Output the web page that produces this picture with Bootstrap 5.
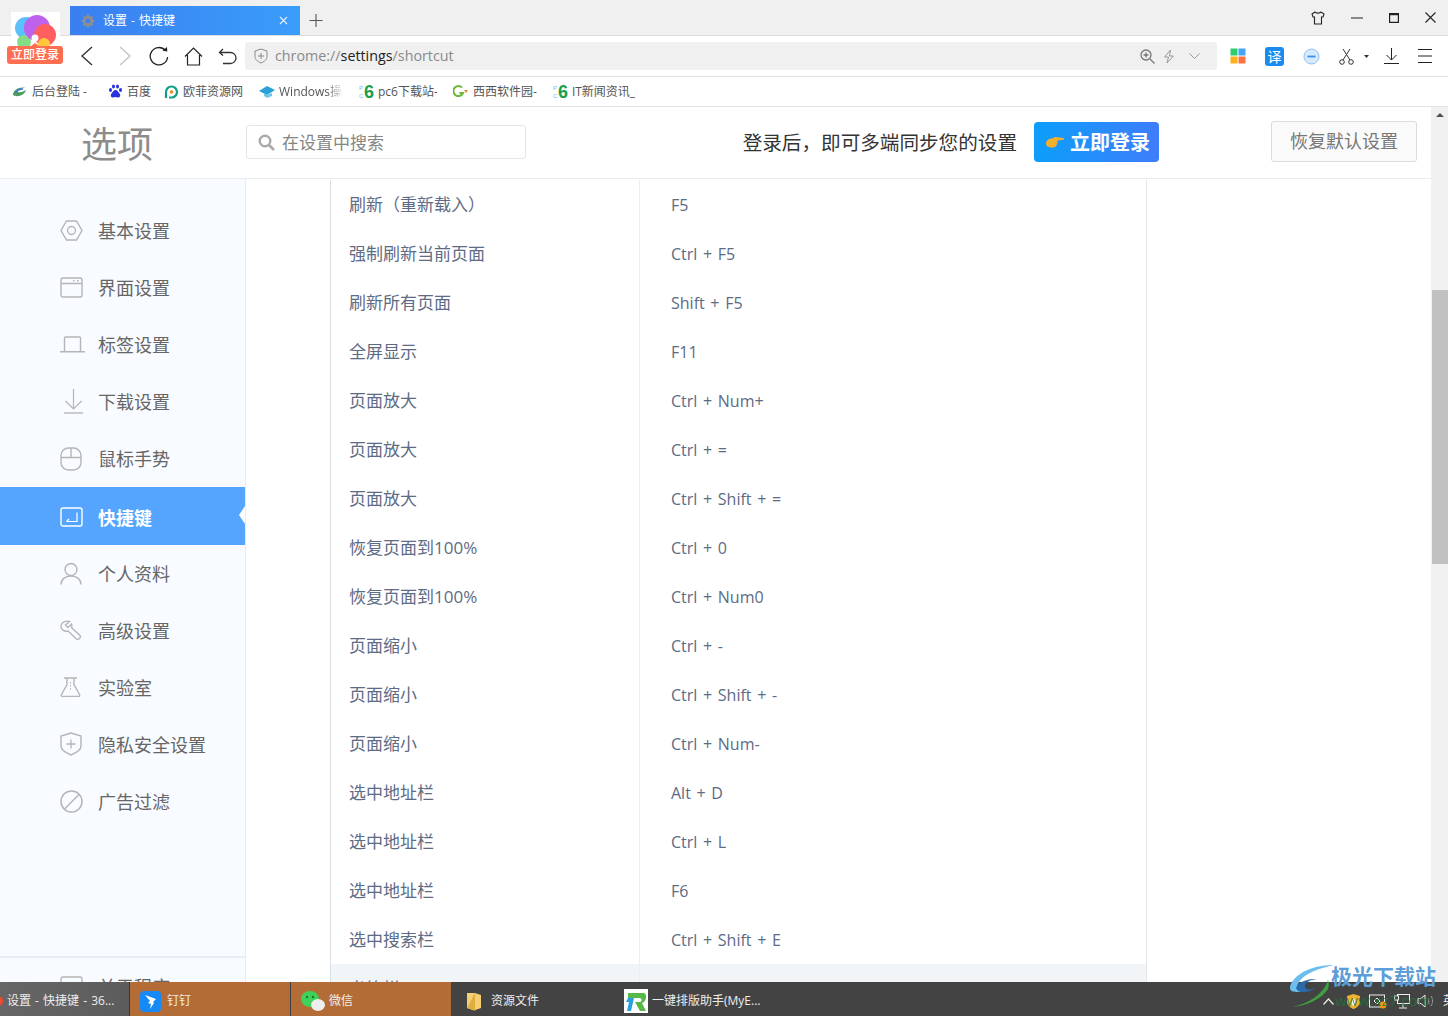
<!DOCTYPE html>
<html lang="zh-CN">
<head>
    <meta charset="UTF-8">
    <meta name="viewport" content="width=device-width, initial-scale=1.0">
    <title>设置 - 快捷键</title>
    <link href="https://cdn.jsdelivr.net/npm/bootstrap@5.3.0/dist/css/bootstrap.min.css" rel="stylesheet">
    <style>
        html, body { height: 1016px; overflow: hidden; }
        body { font-family: "Open Sans", "Noto Sans CJK SC", sans-serif; position: relative; background: #fff; }
        svg { display: block; flex: none; }

        /* browser chrome */
        .tab-strip { height: 36px; background: #f0f0f0; border-bottom: 1px solid #dcdcdc; padding-left: 70px; }
        .tab-active { width: 230px; height: 29px; margin-top: 6px; padding: 0 12px 0 11px; background: linear-gradient(90deg, #3a7ff0, #3a9dfb); color: #fff; font-size: 12px; word-spacing: 1px; }
        .tab-active .tab-x { margin-left: auto; }
        .tab-plus { margin-left: 9px; margin-top: 6px; }
        .win-btns { width: 137px; padding-right: 12px; }
        .addr-row { height: 41px; border-bottom: 1px solid #e3e3e3; background: #fff; padding-left: 79px; }
        .nav-ico { width: 34.5px; }
        .nav-fwd { padding-left: 3px; width: 35.5px; }
        .nav-undo { width: 23px; }
        .addr-box { margin-left: 4px; width: 972px; height: 28px; background: #f0f0f0; border-radius: 3px; padding: 0 17px 0 9px; font-size: 14.3px; color: #8a8a8a; gap: 7px; }
        .addr-box b { font-weight: 400; color: #222; }
        .addr-tail { margin-left: auto; gap: 8px; }
        .addr-chev { margin-left: 6px; }
        .tool-ico { margin-left: 13px; gap: 18px; }
        .tool-a { margin-left: 1px; }
        .tool-b { margin-left: -3px; }
        .scis-group { gap: 10px; margin-left: 1px; }
        .mark-row { height: 30px; border-bottom: 1px solid #e3e3e3; padding-left: 12px; font-size: 12px; color: #555; gap: 16px; }
        .mark-item { gap: 4px; }
        .mark-first { min-width: 60px; margin-left: 1px; }
        .mark-w59 { width: 59px; overflow: hidden; }
        .mark-fade { max-width: 64px; white-space: nowrap; overflow: hidden; -webkit-mask-image: linear-gradient(90deg, #000 75%, transparent); mask-image: linear-gradient(90deg, #000 75%, transparent); }
        .pc-logo { width: 15px; height: 16px; }
        .pc-logo-side { width: 5px; font: 6px/8px "Liberation Sans", sans-serif; color: #6cc0f0; }
        .pc-logo-six { font: 700 18px/16px "Liberation Sans", sans-serif; color: #1aa04a; }

        .app-badge { position: absolute; left: 7px; top: 12px; width: 56px; }
        .app-badge-bg { margin: 0 auto; width: 49px; height: 38px; background: #fff; padding: 3px 0 0 4px; }
        .app-badge-tag { margin-top: -4px; position: relative; height: 18px; background: #ff6e50; border-radius: 3px; color: #fff; font-size: 12px; line-height: 18px; text-align: center; font-weight: 500; }
        .app-badge-tag::before { content: ""; position: absolute; left: 24px; top: -3px; border: 4px solid transparent; border-top: 0; border-bottom: 3px solid #ff6e50; }

        /* page */
        .page-wrap { height: 875px; overflow: hidden; }
        .page-main { width: 1431px; }
        .opt-head { height: 72px; border-bottom: 1px solid #e9ecef; padding: 0 14px 2px 0; }
        .opt-title { width: 246px; padding: 6px 0 0 81px; font-size: 36px; color: #8c8c8c; line-height: 1; }
        .opt-search { width: 280px; height: 34px; border: 1px solid #e3e5e8; border-radius: 3px; padding: 2px 0 0 11px; gap: 7px; font-size: 17px; color: #858585; }
        .opt-sync { margin-left: auto; padding-top: 3px; font-size: 19.6px; color: #333; }
        .opt-login { margin-left: 17px; width: 125px; height: 40px; padding: 2px 0 0 11px; gap: 5px; border: 0; border-radius: 4px; background: linear-gradient(90deg, #0c9efb, #3f7dfa); color: #fff; font-size: 20px; font-weight: 700; }
        .opt-reset { margin-left: 112px; width: 146px; height: 41px; border: 1px solid #dcdcdc; border-radius: 3px; background: #fafafa; color: #777; font-size: 18px; padding: 0; }

        .opt-body { height: 803px; overflow: hidden; }
        .side-col { width: 246px; flex: none; background: #f8fbff; border-right: 1px solid #e8ecf2; padding-top: 23px; }
        .side-item { height: 57.1px; padding: 2px 0 0 60px; gap: 15px; font-size: 18px; color: #666; }
        .side-item.is-on { background: #55a5ff; color: #fff; font-weight: 700; position: relative; padding-top: 4px; }
        .side-item.is-on::after { content: ""; position: absolute; right: 0; top: 19px; border: 9px solid transparent; border-left: 0; border-right: 6px solid #fff; }
        .side-ico { width: 23px; margin-top: -2px; }
        .side-foot { margin-top: 126px; border-top: 2px solid #e9edf3; }

        .keys-col { padding: 1px 0 0 84px; }
        .keys-box { width: 817px; border-left: 1px solid #d9dee4; border-right: 1px solid #e3e6ea; }
        .key-line { height: 49px; }
        .key-line.is-band { background: #f1f5f8; }
        .key-name { width: 309px; padding-left: 18px; font-size: 17px; color: #5d6b85; border-right: 1px solid #eeeeee; line-height: 50px; }
        .key-combo { padding-left: 31px; font-size: 16px; color: #5d6b85; line-height: 51px; word-spacing: 1.5px; }

        .scroll-rail { width: 17px; background: #f1f1f1; position: relative; }
        .scroll-up { margin: 6px auto 0; width: 0; border: 4px solid transparent; border-top: 0; border-bottom: 4px solid #505050; }
        .scroll-thumb { position: absolute; left: 1px; right: 0; top: 183px; height: 274px; background: #c1c1c1; }

        /* taskbar */
        .task-bar { height: 34px; background: #434343; color: #eee; font-size: 12px; white-space: nowrap; }
        .task-cell { height: 34px; padding-top: 4px; }
        .task-first { width: 130px; padding-left: 7px; background: linear-gradient(90deg, #666, #5c5c5c); border-right: 1px solid #333; word-spacing: 1px; position: relative; overflow: hidden; }
        .task-first::before { content: ""; position: absolute; left: -7px; top: 14px; width: 10px; height: 10px; border-radius: 50%; background: #f0492e; }
        .task-org { width: 161px; background: #b46c36; border-right: 1px solid #3f3f3f; gap: 6px; padding-left: 10px; }
        .task-wx { gap: 4px; }
        .task-dark { width: 172px; padding-left: 14px; gap: 9px; }
        .task-tray { margin-left: auto; gap: 9px; padding-top: 4px; }
        .tray-a { margin-left: 4px; }
        .tray-b { margin-left: -4px; }
        .tray-c { margin-left: -2px; }
        .tray-end { width: 5px; overflow: hidden; }

        .site-mark { position: absolute; left: 1288px; top: 964px; width: 160px; height: 50px; pointer-events: none; }
        .site-mark-name { position: absolute; left: 43px; top: -2px; font-size: 21px; font-weight: 700; color: #5d9ed8; line-height: 28px; white-space: nowrap; }
        .site-mark-url { position: absolute; left: 47px; top: 26px; font-size: 15px; color: #1f7a3a; opacity: .75; line-height: 20px; white-space: nowrap; }
        .site-mark svg { position: absolute; left: 0; top: 0; }
    </style>
</head>
<body>
    <div class="tab-strip d-flex">
        <div class="tab-active d-flex align-items-center gap-2">
            <svg width="14" height="14" viewBox="0 0 14 14"><circle cx="7" cy="7" r="3.8" fill="none" stroke="#8e8e8e" stroke-width="2.8"/><path d="M7 .5v2.4M7 11.1v2.4M.5 7h2.4M11.1 7h2.4M2.4 2.4l1.7 1.7M9.9 9.9l1.7 1.7M2.4 11.6l1.7-1.7M9.9 4.1l1.7-1.7" stroke="#8e8e8e" stroke-width="2"/></svg>
            <span>设置 - 快捷键</span>
            <svg class="tab-x" width="9" height="9" viewBox="0 0 9 9"><path d="M1 1l7 7M8 1L1 8" stroke="#e4f0ff" stroke-width="1.1"/></svg>
        </div>
        <svg class="tab-plus" width="14" height="28" viewBox="0 0 14 28"><path d="M7 8v13M.5 14.500h13" stroke="#555" stroke-width="1.100"/></svg>
        <div class="win-btns d-flex align-items-center justify-content-between ms-auto">
            <svg width="14" height="14" viewBox="0 0 14 14"><path d="M4 1L1 3l1 3h1.500v7h7V6H12l1-3-3-2c-.7 1.500-5.300 1.500-6 0z" fill="none" stroke="#222" stroke-width="1.100"/></svg>
            <svg width="12" height="2" viewBox="0 0 12 2"><path d="M0 1h12" stroke="#222"/></svg>
            <svg width="10" height="10" viewBox="0 0 10 10"><path d="M.6.6h8.800v8.800H.6z" fill="none" stroke="#222" stroke-width="1.200"/><path d="M0 1.500h10" stroke="#222" stroke-width="1.500"/></svg>
            <svg width="11" height="11" viewBox="0 0 11 11"><path d="M.5.5l10 10M10.500.5l-10 10" stroke="#222" stroke-width="1.100"/></svg>
        </div>
    </div>

    <div class="addr-row d-flex align-items-center">
        <div class="nav-ico"><svg width="16" height="20" viewBox="0 0 16 20"><path d="M13 1L3 10l10 9" fill="none" stroke="#333" stroke-width="1.400"/></svg></div>
        <div class="nav-fwd"><svg width="16" height="20" viewBox="0 0 16 20"><path d="M3 1l10 9-10 9" fill="none" stroke="#c4c4c4" stroke-width="1.400"/></svg></div>
        <div class="nav-ico"><svg width="20" height="20" viewBox="0 0 20 20"><path d="M16.500 4.500A8.700 8.700 0 1 0 18.600 11" fill="none" stroke="#222" stroke-width="1.300"/><path d="M13.500 4.800l4.800.7-.3-4.600z" fill="#222"/></svg></div>
        <div class="nav-ico"><svg width="19" height="19" viewBox="0 0 19 19"><path d="M1 9.500L9.500 1 18 9.500M3.500 8v10h12V8" fill="none" stroke="#222" stroke-width="1.200"/></svg></div>
        <div class="nav-undo"><svg width="19" height="17" viewBox="0 0 19 17"><path d="M5 1L1.500 4.500 5 7.500" fill="none" stroke="#222" stroke-width="1.200"/><path d="M2 4.500h10.500a5.500 5.500 0 0 1 0 11H5" fill="none" stroke="#333" stroke-width="1.300"/></svg></div>
        <div class="addr-box d-flex align-items-center">
            <svg width="14" height="16" viewBox="0 0 14 16"><path d="M7 1l6 2v5.500c0 3-2.500 5-6 6.500-3.500-1.500-6-3.500-6-6.500V3z" fill="none" stroke="#8a8a8a"/><path d="M7 5v6M4 8h6" stroke="#8a8a8a"/></svg>
            <span>chrome://<b>settings</b>/shortcut</span>
            <div class="addr-tail d-flex align-items-center">
                <svg width="15" height="15" viewBox="0 0 15 15"><circle cx="6" cy="6" r="5" fill="none" stroke="#777" stroke-width="1.300"/><path d="M6 3.500v5M3.500 6h5M10 10l4.500 4.500" stroke="#777" stroke-width="1.300"/></svg>
                <svg width="12" height="15" viewBox="0 0 12 15"><path d="M7.500 1L1.500 8h4L4 14l6.500-7H6.500z" fill="none" stroke="#999"/></svg>
                <svg class="addr-chev" width="11" height="7" viewBox="0 0 11 7"><path d="M.5.500l5 5 5-5" fill="none" stroke="#999"/></svg>
            </div>
        </div>
        <div class="tool-ico d-flex align-items-center">
            <svg width="16" height="16" viewBox="0 0 16 16"><path d="M.5.500h7v7h-7z" fill="#2ecc71"/><path d="M8.500.500h7v7h-7z" fill="#42a5f5"/><path d="M.5 8.500h7v7h-7z" fill="#ffb020"/><path d="M8.500 8.500h7v7h-7z" fill="#ff7043"/></svg>
            <svg class="tool-a" width="19" height="19" viewBox="0 0 19 19"><rect width="19" height="19" rx="3" fill="#1a8cf0"/><text x="9.500" y="15" text-anchor="middle" font-size="14" fill="#fff" font-family="Noto Sans CJK SC">译</text></svg>
            <svg class="tool-a" width="17" height="17" viewBox="0 0 17 17"><circle cx="8.500" cy="8.500" r="7.500" fill="#d6e9fd" stroke="#8cc2f7"/><path d="M4.500 8.500h8" stroke="#3b8fe8" stroke-width="1.800"/></svg>
            <div class="scis-group d-flex align-items-center">
                <svg width="15" height="17" viewBox="0 0 15 17"><circle cx="3" cy="14" r="2.300" fill="none" stroke="#333"/><circle cx="12" cy="14" r="2.300" fill="none" stroke="#333"/><path d="M4 12L11 1M11 12L4 1" stroke="#333"/></svg>
                <svg width="5" height="3" viewBox="0 0 5 3"><path d="M0 0h5L2.500 3z" fill="#333"/></svg>
            </div>
            <svg class="tool-b" width="15" height="16" viewBox="0 0 15 16"><path d="M7.500 0v12M2.500 7l5 5 5-5M0 15.500h15" fill="none" stroke="#222"/></svg>
            <svg class="tool-a" width="14" height="14" viewBox="0 0 14 14"><path d="M0 .5h14M0 7h14M0 13.500h14" stroke="#222"/></svg>
        </div>
    </div>

    <div class="mark-row d-flex align-items-center">
        <div class="mark-item d-flex align-items-center"><svg width="15" height="12" viewBox="0 0 15 12"><path d="M1 9c0-5 7-9 13-7C9 2 6 4 6 6c3 1 6-1 8-2-1 5-9 8-13 5z" fill="#4a9a60"/><path d="M3 7c2-3 6-4 8-4" stroke="#3a7bd5" fill="none" stroke-width="1.500"/></svg><span class="mark-first text-nowrap">后台登陆 -</span></div>
        <div class="mark-item d-flex align-items-center"><svg width="15" height="15" viewBox="0 0 15 15"><g fill="#2932e1"><ellipse cx="2.500" cy="6" rx="1.500" ry="2"/><ellipse cx="5.500" cy="2.500" rx="1.500" ry="2"/><ellipse cx="9.500" cy="2.500" rx="1.500" ry="2"/><ellipse cx="12.500" cy="6" rx="1.500" ry="2"/><path d="M7.500 6c-2 0-2.500 2-4 3.500-1.500 2-.5 4 1.500 4 1 0 1.500-.4 2.500-.4s1.500.4 2.500.4c2 0 3-2 1.500-4C10 8 9.500 6 7.500 6z"/></g></svg><span>百度</span></div>
        <div class="mark-item d-flex align-items-center" style="margin-left:-4px"><svg width="16" height="16" viewBox="0 0 16 16"><path d="M3 14V8a5.500 5.500 0 1 1 5.500 5.500H6" fill="none" stroke="#11a083" stroke-width="2.200"/><circle cx="8.500" cy="8" r="1.800" fill="#f08a24"/></svg><span>欧菲资源网</span></div>
        <div class="mark-item d-flex align-items-center"><svg width="16" height="13" viewBox="0 0 16 13"><path d="M0 6l8-5 8 4-8 5z" fill="#2ba0d8"/><path d="M5 8l3 2 5-2v3l-5 2-3-2z" fill="#6cc6ec"/></svg><span class="mark-fade">Windows操作系统</span></div>
        <div class="mark-item d-flex align-items-center"><div class="pc-logo d-flex align-items-center"><div class="pc-logo-side"><div>P</div><div>C</div></div><div class="pc-logo-six">6</div></div><span class="mark-w59 text-nowrap">pc6下载站-</span></div>
        <div class="mark-item d-flex align-items-center"><svg width="16" height="15" viewBox="0 0 16 15"><path d="M9 3.500A5 5 0 1 0 10 9H6.500" fill="none" stroke="#6cb83a" stroke-width="2"/><path d="M11 6h4l-2 3z" fill="#e08a2a"/></svg><span class="text-nowrap">西西软件园-</span></div>
        <div class="mark-item d-flex align-items-center"><div class="pc-logo d-flex align-items-center"><div class="pc-logo-side"><div>P</div><div>C</div></div><div class="pc-logo-six">6</div></div><span class="text-nowrap">IT新闻资讯_</span></div>
    </div>

    <div class="app-badge">
        <div class="app-badge-bg">
            <svg width="42" height="35" viewBox="0 0 42 35"><circle cx="11" cy="13" r="11" fill="#5cc0fa"/><circle cx="9" cy="27" r="7" fill="#84dc84"/><circle cx="22" cy="13" r="13" fill="#be62ee"/><circle cx="30" cy="20" r="11" fill="#ff5f5f"/><circle cx="29" cy="29" r="6" fill="#ffc83c"/><circle cx="20" cy="23" r="3.500" fill="#fff"/></svg>
        </div>
        <div class="app-badge-tag">立即登录</div>
    </div>

    <div class="page-wrap d-flex">
        <div class="page-main">
            <div class="opt-head d-flex align-items-center">
                <div class="opt-title">选项</div>
                <div class="opt-search d-flex align-items-center">
                    <svg width="17" height="17" viewBox="0 0 17 17"><circle cx="7" cy="7" r="5.300" fill="none" stroke="#aaa" stroke-width="2.400"/><path d="M11 11l5 5" stroke="#aaa" stroke-width="2.600"/></svg>
                    <span>在设置中搜索</span>
                </div>
                <div class="opt-sync">登录后，即可多端同步您的设置</div>
                <button class="btn opt-login d-flex align-items-center" type="button">
                    <svg width="20" height="13" viewBox="0 0 20 13"><path d="M1 7.500c0-3 3-5 6-5L10 1l8.500 1c1 .5.500 1.800 0 1.800L12.500 4.500c0 2.500-.5 5-2.500 6.500-3 1.500-9 .5-9-3.500z" fill="#f3b02c"/></svg>
                    <span>立即登录</span>
                </button>
                <button class="btn opt-reset" type="button">恢复默认设置</button>
            </div>
            <div class="opt-body d-flex">
                <div class="side-col">
                    <div class="side-item d-flex align-items-center"><span class="side-ico"><svg width="23" height="21" viewBox="0 0 23 21"><path d="M6.500 1h10l5.500 9.500L16.500 20h-10L1 10.500z" fill="none" stroke="#b5b5b5" stroke-width="1.400"/><circle cx="11.500" cy="10.500" r="4" fill="none" stroke="#b5b5b5" stroke-width="1.400"/></svg></span>基本设置</div>
                    <div class="side-item d-flex align-items-center"><span class="side-ico"><svg width="23" height="21" viewBox="0 0 23 21"><rect x="1" y="1" width="21" height="19" rx="2" fill="none" stroke="#b5b5b5" stroke-width="1.400"/><path d="M1 6.500h21M13 3.800h1.500M17 3.800h1.500" stroke="#b5b5b5" stroke-width="1.400"/></svg></span>界面设置</div>
                    <div class="side-item d-flex align-items-center"><span class="side-ico"><svg width="25" height="17" viewBox="0 0 25 17"><path d="M4.500 15.500V2a1 1 0 0 1 1-1h14a1 1 0 0 1 1 1v13.500M0 15.800h25" fill="none" stroke="#b5b5b5" stroke-width="1.400"/></svg></span>标签设置</div>
                    <div class="side-item d-flex align-items-center"><span class="side-ico"><svg class="ms-1" width="19" height="25" viewBox="0 0 19 25"><path d="M9.500 0v20M1.500 12l8 8 8-8" fill="none" stroke="#b5b5b5" stroke-width="1.200"/><path d="M0 24h19" stroke="#b5b5b5" stroke-width="1.400"/></svg></span>下载设置</div>
                    <div class="side-item d-flex align-items-center"><span class="side-ico"><svg width="22" height="24" viewBox="0 0 22 24"><rect x="1" y="1" width="20" height="22" rx="7.500" fill="none" stroke="#b5b5b5" stroke-width="1.400"/><path d="M1 10.500h20M11 1v9.500" stroke="#b5b5b5" stroke-width="1.400"/></svg></span>鼠标手势</div>
                    <div class="side-item is-on d-flex align-items-center"><span class="side-ico"><svg width="23" height="20" viewBox="0 0 23 20"><rect x="1" y="1" width="21" height="18" rx="2" fill="none" stroke="#fff" stroke-width="1.400"/><path d="M17 5.500v9H6.500M9 12l-2.500 2.500" fill="none" stroke="#fff" stroke-width="1.200"/></svg></span>快捷键</div>
                    <div class="side-item d-flex align-items-center"><span class="side-ico"><svg width="22" height="23" viewBox="0 0 22 23"><circle cx="11" cy="7.500" r="6" fill="none" stroke="#b5b5b5" stroke-width="1.400"/><path d="M1 22.500c0-5 4-8.500 10-8.500s10 3.500 10 8.500" fill="none" stroke="#b5b5b5" stroke-width="1.400"/></svg></span>个人资料</div>
                    <div class="side-item d-flex align-items-center"><span class="side-ico"><svg class="mt-n1" width="22" height="21" viewBox="0 0 22 21"><path d="M9.500 1.500L5.500 5 8 7.500 11.500 4C12 5.500 12 6.500 11.500 7.500L20 15.500C21.500 17 18.500 20.500 16.500 19L8 11C4.500 12 .5 9.500 1 5.500 1.500 2 6 .5 9.500 1.500z" fill="none" stroke="#b5b5b5" stroke-width="1.400"/></svg></span>高级设置</div>
                    <div class="side-item d-flex align-items-center"><span class="side-ico"><svg width="21" height="20" viewBox="0 0 21 20"><path d="M4 1h13M7 1v6.500L1.500 17.500c-.5 1 0 2 1 2h16c1 0 1.500-1 1-2L14 7.500V1" fill="none" stroke="#b5b5b5" stroke-width="1.400"/><path d="M10.500 5v9" stroke="#b5b5b5" stroke-dasharray="1.500 1.500"/></svg></span>实验室</div>
                    <div class="side-item d-flex align-items-center"><span class="side-ico"><svg width="22" height="24" viewBox="0 0 22 24"><path d="M11 1l10 3v10c0 4-5 7-10 9-5-2-10-5-10-9V4z" fill="none" stroke="#b5b5b5" stroke-width="1.400"/><path d="M11 7.500v9M6.500 12h9" stroke="#b5b5b5" stroke-width="1.300"/></svg></span>隐私安全设置</div>
                    <div class="side-item d-flex align-items-center"><span class="side-ico"><svg width="23" height="23" viewBox="0 0 23 23"><circle cx="11.500" cy="11.500" r="10.500" fill="none" stroke="#b5b5b5" stroke-width="1.500"/><path d="M4.500 19L19 4.500" stroke="#b5b5b5" stroke-width="1.500"/></svg></span>广告过滤</div>
                    <div class="side-foot">
                        <div class="side-item d-flex align-items-center"><span class="side-ico"><svg width="23" height="21" viewBox="0 0 23 21"><rect x="1" y="1" width="21" height="19" rx="2" fill="none" stroke="#b5b5b5" stroke-width="1.400"/></svg></span>关于程序</div>
                    </div>
                </div>
                <div class="keys-col">
                    <div class="keys-box">
                        <div class="key-line d-flex"><div class="key-name">刷新（重新载入）</div><div class="key-combo">F5</div></div>
                        <div class="key-line d-flex"><div class="key-name">强制刷新当前页面</div><div class="key-combo">Ctrl + F5</div></div>
                        <div class="key-line d-flex"><div class="key-name">刷新所有页面</div><div class="key-combo">Shift + F5</div></div>
                        <div class="key-line d-flex"><div class="key-name">全屏显示</div><div class="key-combo">F11</div></div>
                        <div class="key-line d-flex"><div class="key-name">页面放大</div><div class="key-combo">Ctrl + Num+</div></div>
                        <div class="key-line d-flex"><div class="key-name">页面放大</div><div class="key-combo">Ctrl + =</div></div>
                        <div class="key-line d-flex"><div class="key-name">页面放大</div><div class="key-combo">Ctrl + Shift + =</div></div>
                        <div class="key-line d-flex"><div class="key-name">恢复页面到100%</div><div class="key-combo">Ctrl + 0</div></div>
                        <div class="key-line d-flex"><div class="key-name">恢复页面到100%</div><div class="key-combo">Ctrl + Num0</div></div>
                        <div class="key-line d-flex"><div class="key-name">页面缩小</div><div class="key-combo">Ctrl + -</div></div>
                        <div class="key-line d-flex"><div class="key-name">页面缩小</div><div class="key-combo">Ctrl + Shift + -</div></div>
                        <div class="key-line d-flex"><div class="key-name">页面缩小</div><div class="key-combo">Ctrl + Num-</div></div>
                        <div class="key-line d-flex"><div class="key-name">选中地址栏</div><div class="key-combo">Alt + D</div></div>
                        <div class="key-line d-flex"><div class="key-name">选中地址栏</div><div class="key-combo">Ctrl + L</div></div>
                        <div class="key-line d-flex"><div class="key-name">选中地址栏</div><div class="key-combo">F6</div></div>
                        <div class="key-line d-flex"><div class="key-name">选中搜索栏</div><div class="key-combo">Ctrl + Shift + E</div></div>
                        <div class="key-line is-band d-flex"><div class="key-name">书签栏</div><div class="key-combo"></div></div>
                    </div>
                </div>
            </div>
        </div>
        <div class="scroll-rail">
            <div class="scroll-up"></div>
            <div class="scroll-thumb"></div>
        </div>
    </div>

    <div class="task-bar d-flex">
        <div class="task-cell task-first d-flex align-items-center">设置 - 快捷键 - 36...</div>
        <div class="task-cell task-org d-flex align-items-center"><svg width="21" height="21" viewBox="0 0 21 21"><rect width="21" height="21" rx="4" fill="#1589f5"/><path d="M5 4l11 4-3 3 1 1-4 6 1-5-3-1 2-2z" fill="#fff"/></svg><span>钉钉</span></div>
        <div class="task-cell task-org task-wx d-flex align-items-center"><svg width="24" height="21" viewBox="0 0 24 21"><ellipse cx="9" cy="8" rx="9" ry="8" fill="#3fd15a"/><ellipse cx="17" cy="14" rx="7" ry="6" fill="#eee"/><circle cx="6" cy="6" r="1.200" fill="#1a7a30"/><circle cx="12" cy="6" r="1.200" fill="#1a7a30"/></svg><span>微信</span></div>
        <div class="task-cell task-dark d-flex align-items-center"><svg width="16" height="19" viewBox="0 0 16 19"><path d="M1 1h8l6 2v13l-7 2.500L1 16z" fill="#f5cf72"/><path d="M9 1v17.500l-8-2.500" fill="#e0ad42"/></svg><span>资源文件</span></div>
        <div class="task-cell d-flex align-items-center gap-1"><svg width="24" height="24" viewBox="0 0 24 24"><rect width="24" height="24" fill="#fff"/><path d="M4 4h16c3 0 3 9-2 10l4 8h-6l-5-9h5c2 0 2-4 0-4H4z" fill="#55b848"/><path d="M4 9h6l-3 13H3l2-9H2z" fill="#2ba0e0"/></svg><span>一键排版助手(MyE...</span></div>
        <div class="task-tray d-flex align-items-center">
            <svg width="11" height="7" viewBox="0 0 11 7"><path d="M.5 6.500l5-5.500 5 5.500" fill="none" stroke="#eee" stroke-width="1.200"/></svg>
            <svg class="tray-a" width="13" height="15" viewBox="0 0 13 15"><path d="M6.500 0L13 2v6c0 3-3 5.500-6.500 7C3 13.500 0 11 0 8V2z" fill="#f0b030"/><path d="M6.500 4c2 2 2.500 6 0 8-2-1-2-5 0-8z" fill="#fff"/></svg>
            <svg width="20" height="16" viewBox="0 0 20 16"><rect x=".5" y="2" width="15" height="12" fill="none" stroke="#eee"/><path d="M5 8l3-3 3 3-3 3z" fill="none" stroke="#eee"/><circle cx="14" cy="12" r="3.500" fill="#f5980f"/></svg>
            <svg class="tray-b" width="16" height="15" viewBox="0 0 16 15"><rect x="3.500" y=".5" width="12" height="9" fill="none" stroke="#eee"/><rect x=".5" y="2" width="4" height="4" fill="#434343" stroke="#eee"/><path d="M9 9.500v4M5 14h8" stroke="#eee"/></svg>
            <svg class="tray-c" width="17" height="14" viewBox="0 0 17 14"><path d="M1 4.500h3L8 1v12L4 9.500H1z" fill="none" stroke="#eee"/><path d="M11 4c1 2 1 4 0 6M14 2c2 3 2 7 0 10" fill="none" stroke="#999"/></svg>
            <span class="tray-end">英</span>
        </div>
    </div>

    <div class="site-mark">
        <svg width="48" height="44" viewBox="0 0 48 44"><path d="M46 1C30 1 10 6 3 20c-4 8 4 9 12 7-5 0-8-3-4-9C17 9 32 4 46 1z" fill="#6cbdf0"/><path d="M8 24c4-8 16-10 22-8-8-1-14 3-13 7 1 3 6 3 10 1-5 5-17 6-19 0z" fill="#2b6aa8"/><path d="M40 16C36 30 20 40 4 43c14-1 30-8 36-18 1-3 1-6 0-9z" fill="#3f9e3f"/></svg>
        <span class="site-mark-name">极光下载站</span>
        <span class="site-mark-url">www.xz7.com</span>
    </div>

    <script src="https://cdn.jsdelivr.net/npm/bootstrap@5.3.0/dist/js/bootstrap.bundle.min.js"></script>
</body>
</html>
